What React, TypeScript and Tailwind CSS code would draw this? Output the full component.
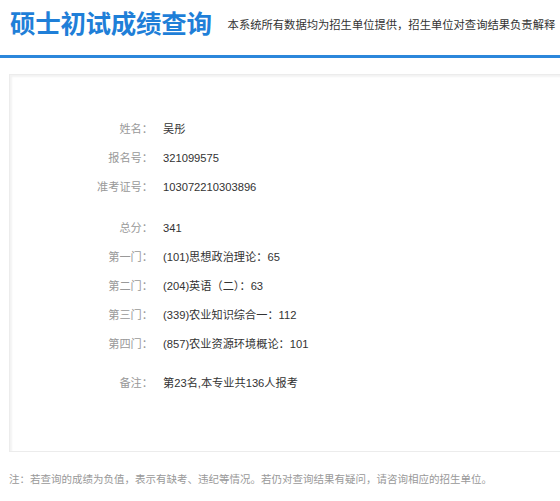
const rows1 = [
  { label: '姓名：', value: '吴彤' },
  { label: '报名号：', value: '321099575' },
  { label: '准考证号：', value: '103072210303896' },
]

const rows2 = [
  { label: '总分：', value: '341' },
  { label: '第一门：', value: '(101)思想政治理论：65' },
  { label: '第二门：', value: '(204)英语（二）：63' },
  { label: '第三门：', value: '(339)农业知识综合一：112' },
  { label: '第四门：', value: '(857)农业资源环境概论：101' },
]

function Row({ label, value }: { label: string; value: string }) {
  return (
    <div className="flex items-center h-[29px]">
      <span className="w-[143px] text-right text-[#999]">{label}</span>
      <span className="pl-[10px] text-[#333]">{value}</span>
    </div>
  )
}

export default function App() {
  return (
    <div
      className="w-[560px] h-[501px] bg-white overflow-hidden"
      style={{ fontFamily: '"Liberation Sans", "Noto Sans CJK SC", sans-serif' }}
    >
      <header className="flex items-end h-[58px] pl-[10px] border-b-[3px] border-[#2b87db]">
        <h1 className="shrink-0 whitespace-nowrap text-[25.5px] leading-none font-bold text-[#1f7fd8] pb-[18px] tracking-[-0.3px]">
          硕士初试成绩查询
        </h1>
        <p className="ml-[16px] text-[11.3px] text-[#333] pb-[21px] whitespace-nowrap">
          本系统所有数据均为招生单位提供，招生单位对查询结果负责解释
        </p>
      </header>

      <div className="mt-[16px] ml-[9px] -mr-[10px] h-[378px] border border-[#ececec] shadow-[inset_2px_2px_2px_#f3f3f3] text-[11.2px] pt-[40px]">
        {rows1.map((r) => (
          <Row key={r.label} {...r} />
        ))}
        <div className="h-[12px]" />
        {rows2.map((r) => (
          <Row key={r.label} {...r} />
        ))}
        <div className="h-[10px]" />
        <Row label="备注：" value="第23名,本专业共136人报考" />
      </div>

      <p className="mt-[20px] ml-[9px] text-[10.5px] text-[#999] whitespace-nowrap">
        注：若查询的成绩为负值，表示有缺考、违纪等情况。若仍对查询结果有疑问，请咨询相应的招生单位。
      </p>
    </div>
  )
}
